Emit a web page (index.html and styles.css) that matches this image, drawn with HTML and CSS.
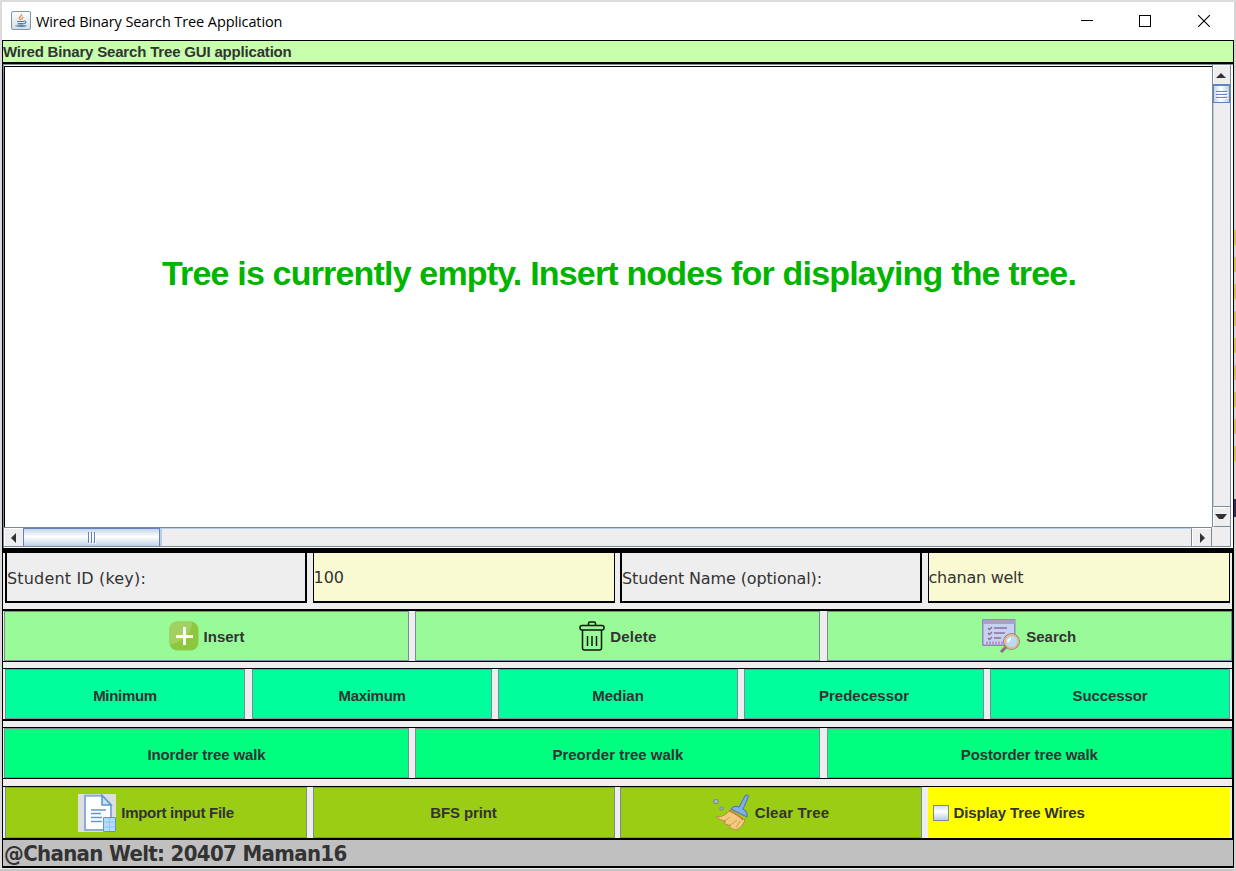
FILE: index.html
```
<!DOCTYPE html>
<html lang="en">
<head>
<meta charset="utf-8">
<title>Wired Binary Search Tree Application</title>
<link rel="stylesheet" href="styles.css">
</head>
<body>
<div class="desktop">
<div class="window">
  <header class="titlebar">
    <svg class="java" width="20" height="20" viewBox="0 0 20 20"><defs><linearGradient id="jg" x2="0" y2="1"><stop stop-color="#fff"/><stop offset="1" stop-color="#d3dce4"/></linearGradient></defs><rect x=".5" y=".5" width="19" height="18" rx="1.5" fill="url(#jg)" stroke="#8196a8"/><path d="M10.500 3c1 2-2.500 2.500-2 4.300.2.900 1 1.200 1.300 1.900M12.500 6c-1.500.8-2 1.300-1.300 2.600" fill="none" stroke="#e58b4e" stroke-width="1.300"/><path d="M6 10.500h7M6.700 12.500h6M13 10c2.500-.5 2.500 2 0 2.500M4.500 14.500c1 1.200 9 1.200 10.500 0M6.500 14h6" fill="none" stroke="#4f7f9f" stroke-width="1.100"/></svg>
    <span class="caption">Wired Binary Search Tree Application</span>
    <div class="controls">
      <svg width="12" height="12" viewBox="0 0 12 12"><path d="M0 5.500h12" stroke="#000"/></svg>
      <svg width="12" height="12" viewBox="0 0 12 12"><rect x=".5" y=".5" width="11" height="11" fill="none" stroke="#000"/></svg>
      <svg width="12" height="12" viewBox="0 0 12 12"><path d="M0 0l12 12M12 0L0 12" stroke="#000" stroke-width="1.100"/></svg>
    </div>
  </header>
  <main class="frame">
    <div class="banner"><span>Wired Binary Search Tree GUI application</span></div>
    <div class="scrollpane">
      <div class="canvas"><span class="message">Tree is currently empty. Insert nodes for displaying the tree.</span></div>
      <div class="vbar">
        <div class="arrow up"><svg width="10" height="5"><path d="M5 0l5 5H0z" fill="#333"/></svg></div>
        <div class="vthumb"><i></i><i></i><i></i></div>
        <div class="vtrack"></div>
        <div class="arrow down"><svg width="12" height="6"><path d="M0 0h12L8 5H4z" fill="#333"/></svg></div>
      </div>
      <div class="hbar">
        <div class="arrow left"><svg width="5" height="10"><path d="M5 0v10L0 5z" fill="#333"/></svg></div>
        <div class="hthumb"><i></i><i></i><i></i></div>
        <div class="htrack"></div>
        <div class="arrow right"><svg width="5" height="10"><path d="M0 0v10l5-5z" fill="#333"/></svg></div>
      </div>
      <div class="corner"></div>
    </div>
    <div class="row fields">
      <div class="label"><span class="t-id">Student ID (key):</span></div>
      <div class="input"><span class="t-num">100</span></div>
      <div class="label"><span class="t-name">Student Name (optional):</span></div>
      <div class="input"><span class="t-val">chanan welt</span></div>
    </div>
    <div class="row three pale">
      <div class="btn"><svg width="30" height="30" viewBox="0 0 30 30"><rect x=".5" y=".5" width="29" height="29" rx="8" fill="#8dc63f"/><path d="M8 .5h15c0 12-8 20-22.500 23V8Q.5.500 8 .5z" fill="#a3d063"/><path d="M15.500 6v18M7 15.500h17" stroke="#fff" stroke-width="3"/></svg><span>Insert</span></div>
      <div class="btn"><svg width="26" height="30" viewBox="0 0 26 30"><g fill="none" stroke="#0b190b" stroke-width="1.500"><path d="M9.500 4V2.500q0-1.500 1.500-1.500h4q1.500 0 1.500 1.500V4M3.500 9v18q0 2 2 2h15q2 0 2-2V9"/><rect x="1" y="4.500" width="24" height="4.500" rx="2"/><path d="M8.500 15v10M13 15v10M17.500 15v10"/></g></svg><span class="wide">Delete</span></div>
      <div class="btn"><svg width="39" height="34" viewBox="0 0 39 34"><rect x=".8" y=".8" width="32" height="25.500" fill="#c6d2f0" stroke="#9284b4" stroke-width="1.400"/><path d="M1 1h32v4H1z" fill="#a9a0cc"/><path d="M6 9l1.500 1.500L10 8M6 14l1.500 1.500L10 13M6 19l1.500 1.500L10 18M12 9h13M12 14h11M12 19h7" fill="none" stroke="#8b709d" stroke-width="1.500"/><path d="M4 24h17" stroke="#ad9cc8" stroke-width="3" stroke-dasharray="2 1"/><path d="M24 28l-5 5" stroke="#946981" stroke-width="3"/><circle cx="29.500" cy="22.500" r="7.800" fill="#b9dbfa" stroke="#896080"/><circle cx="29.500" cy="22.500" r="6.600" fill="none" stroke="#eab676" stroke-width="1.800"/><path d="M26 23c0-2 1-3 3-3" fill="none" stroke="#fff" stroke-width="2"/></svg><span>Search</span></div>
    </div>
    <div class="row five mint">
      <div class="btn"><span class="tight">Minimum</span></div><div class="btn"><span class="tight">Maximum</span></div><div class="btn"><span>Median</span></div><div class="btn"><span>Predecessor</span></div><div class="btn"><span class="snug">Successor</span></div>
    </div>
    <div class="row three spring">
      <div class="btn"><span class="snug">Inorder tree walk</span></div><div class="btn"><span>Preorder tree walk</span></div><div class="btn"><span class="snug">Postorder tree walk</span></div>
    </div>
    <div class="row four olive">
      <div class="btn"><svg width="38" height="38" viewBox="0 0 38 38"><path fill="#dedede" d="M0 0h38v38H0z"/><path d="M7 1.700h17L33 11v25H7z" fill="#fff" stroke="#8badd5" stroke-width="2"/><path d="M24 1.500V11h9z" fill="#cce2f7" stroke="#5f99ce" stroke-width="1.600"/><path d="M13 16h15M13 19.500h10M13 23.500h11M13 27.500h11" stroke="#6698c9" stroke-width="1.300"/><path d="M25.500 23.500h12v14h-12z" fill="#b5dcff" stroke="#5997d2"/><path d="M31.500 24v13M26 28h11M26 33h11" stroke="#8abfe9" stroke-width=".8"/></svg><span class="tight">Import input File</span></div>
      <div class="btn"><span class="snug">BFS print</span></div>
      <div class="btn"><svg width="37" height="37" viewBox="0 0 37 37"><g stroke="#788ba1" stroke-width="1.200" fill="#a6bed0"><rect x="1" y="5.500" width="4" height="4" rx="1"/><rect x="7" y="13" width="3" height="3" rx="1"/></g><path d="M17 16l15 10c-1 4-4 7-8 10-3 0-6-2-8-3l2-2c-3 1-5-1-7-2l2-2c-4 0-7-2-10-4 6 0 10-2 14-7z" fill="#f2c97f" stroke="#b58b43" stroke-width="1"/><path d="M16 17c5 2 10 5 14 9" fill="none" stroke="#d96b46" stroke-width="1.300"/><path d="M18 15q3-4 8-2L32 2q2-2 3.500.5L30 15q5 3 4 8z" fill="#83afe8" stroke="#5379b7" stroke-width="1.100"/><path d="M10 28l7-5M16 32l8-6M23 34l4-7" stroke="#cf9e54" fill="none"/></svg><span class="wide">Clear Tree</span></div>
      <div class="check"><i></i><span class="snug">Display Tree Wires</span></div>
    </div>
    <footer class="credit"><span>@Chanan Welt: 20407 Maman16</span></footer>
  </main>
</div>
<div class="edge"></div>
</div>
</body>
</html>
```
FILE: styles.css
```
* { box-sizing: border-box; }
body { margin: 0; background: #dcdcdc; font-family: "Liberation Sans", sans-serif; color: #333; }
svg, i { display: block; flex: none; }
span { white-space: nowrap; }
.desktop { display: grid; grid-template-columns: 1232px 2px; padding: 2px 0 0 2px; height: 871px; overflow: hidden; background: linear-gradient(#dcdcdc 0 868px, #eee 868px 869px, #c4c4c4 869px); }
.window { height: 866px; }
.titlebar { height: 38px; background: #fff; display: flex; align-items: center; padding: 0 24px 0 9px; }
.caption { font: 14.5px "Open Sans", sans-serif; color: #000; margin-left: 5px; letter-spacing: -.1px; }
.controls { margin-left: auto; display: flex; gap: 47px; }
.controls svg:first-child { margin-right: -1px; }
.frame { height: 828px; background: #eee; border: solid #000; border-width: 1px 2px 2px 1px; display: grid; grid-template-rows: 23px 484px 55px 6px 53px 6px 53px 6px 52px 7px 52px 28px; }
.banner { background: #c7ffad; border-bottom: 2px solid #000; font-weight: bold; font-size: 15px; line-height: 21px; letter-spacing: -.18px; }
.scrollpane { display: grid; grid-template-columns: 1208px 19px; grid-template-rows: 462px 20px; border: 1px solid #7a8a99; border-width: 1px 0 0 1px; background: #fff; }
.canvas { margin-top: 1px; background: #fff; border: solid #000; border-width: 1px 0 0 1px; display: flex; justify-content: center; padding: 184px 0 0 21px; }
.message { color: #00b400; font: bold 34px/44px "Liberation Sans", sans-serif; letter-spacing: -.82px; }
.vbar { display: grid; grid-template-rows: 19px 19px 404px 20px; border: solid #7a8a99; border-width: 0 1px; }
.vbar, .hbar { background: #eee; }
.arrow { display: flex; align-items: center; justify-content: center; border: 1px solid #fff; border-width: 1px 0 0 1px; }
.up { padding-top: 1px; }
.left { padding-right: 2px; }
.vbar .arrow { padding-right: 2px; }
.vthumb { border: 1px solid #6382bf; border-top-width: 2px; background: linear-gradient(90deg, #c4d5e8, #fff 45%, #bed1e6); display: flex; flex-direction: column; justify-content: center; align-items: center; gap: 2px; }
.vthumb i { width: 11px; height: 1px; background: #6382bf; box-shadow: 1px 1px #fff; }
.vtrack { border-left: 1px solid #b8cfe5; border-bottom: 1px solid #7a8a99; }
.down { border-bottom: 1px solid #7a8a99; }
.hbar { display: grid; grid-template-columns: 19px 137px 1032px 19px; border: solid #7a8a99; border-width: 1px 0; border-right: 1px solid #7a8a99; }
.hthumb { border: solid #6382bf; border-width: 1px 1px 0; background: linear-gradient(#c4d5e8, #fff 45%, #bed1e6); display: flex; justify-content: center; align-items: center; gap: 2px; }
.hthumb i { height: 11px; width: 1px; background: #6382bf; box-shadow: 1px 1px #fff; }
.htrack { border: solid #b8cfe5; border-width: 1px 0 0 2px; border-right: 1px solid #7a8a99; }
.corner { background: #eee; border: solid #7a8a99; border-width: 0 1px 1px 0; }
.row { display: grid; grid-column: 1; }
.fields { grid-row: 3; border-top: 5px solid #000; grid-template-columns: 302px 302px 302px 302px; grid-template-rows: 50px; column-gap: 5.5px; padding: 0 2px; font: 16px "DejaVu Sans", sans-serif; }
.label { border: 2px solid #000; border-top: 0; line-height: 52px; }
.input { background: #fafad2; border: 1px solid #000; border-width: 0 1px 2px; line-height: 49px; }
.t-id { letter-spacing: .17px; }
.t-name { letter-spacing: -.13px; }
.t-val { letter-spacing: -.25px; }
.three, .five, .four { font-size: 15px; font-weight: bold; }
.three { grid-template-columns: 405px 405px 405px; column-gap: 6.4px; padding: 0 1px; }
.pale { grid-row: 5; border: solid #000; border-width: 2px 0 1px; }
.five { grid-row: 7; border: solid #000; border-width: 1px 0 2px; grid-template-columns: 241px repeat(4, 240px); column-gap: 6px; padding-left: 2px; }
.five .btn:first-child { margin-right: 1px; }
.spring { grid-row: 9; border: solid #000; border-width: 1px 0; }
.four { grid-row: 11; border-top: 1px solid #000; grid-template-columns: repeat(4, 302px); column-gap: 5.5px; padding-left: 2px; }
.btn { border: 1px solid #7a8a99; display: flex; align-items: center; justify-content: center; gap: 5px; }
.pale .btn { background: #98fb98; }
.mint .btn { background: #00ff9c; padding-top: 2px; }
.spring .btn { background: #00ff7f; padding-top: 2px; }
.olive .btn { background: #9acd14; }
.tight { letter-spacing: -.3px; }
.snug { letter-spacing: -.12px; }
.wide { letter-spacing: .2px; }
.check { background: #ff0; display: flex; align-items: center; gap: 5px; padding-left: 5px; }
.check i { width: 16px; height: 16px; border: 1px solid #7a8a99; background: linear-gradient(#d5e1ee, #fff 40%, #b8cfe5); }
.credit { grid-row: 12; background: #c0c0c0; border-top: 2px solid #000; font: bold 22px/27px "DejaVu Sans Condensed", "DejaVu Sans", sans-serif; letter-spacing: -.65px; padding-left: 1px; }
.edge { height: 869px; background: linear-gradient(#33295f, #33295f) 0 497px / 2px 18px no-repeat, repeating-linear-gradient(#dfb94b 0 15px, #d8d8d8 15px 27px) 0 228px / 2px 231px no-repeat, #d4d4d4; }
```
